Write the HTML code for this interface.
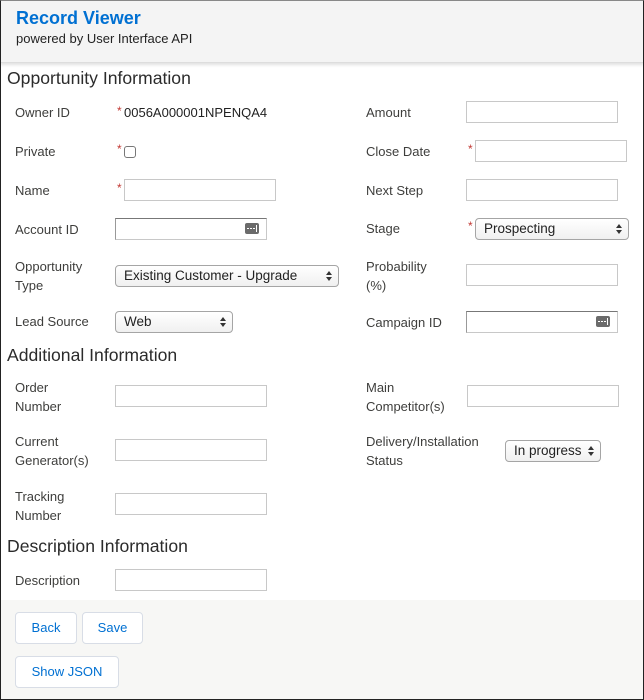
<!DOCTYPE html>
<html><head><meta charset="utf-8"><style>
*{box-sizing:border-box;margin:0;padding:0}
body{width:644px;height:700px;position:relative;background:#fff;font-family:"Liberation Sans",sans-serif;font-size:13px;color:#16325c;overflow:hidden}
.frame{position:absolute;left:0;top:0;width:644px;height:700px;border:1px solid #222;border-top:1px solid #888;pointer-events:none;z-index:10}
.hdr{position:absolute;left:0;top:0;width:644px;height:63px;background:#f4f4f4;border-bottom:1px solid #ddd;box-shadow:0 2px 3px rgba(0,0,0,.12)}
.t{position:absolute;white-space:nowrap}
.lbl{position:absolute;color:#3e3e3c;font-size:13px;line-height:19px}
.h2{position:absolute;left:7px;font-size:17.6px;color:#2b2b2b}
.in{position:absolute;height:22px;border:1px solid #c8c8c8;background:#fff}
.lk{border-top-color:#777;border-left-color:#999}
.ic{position:absolute;right:7px;top:4px;width:14px;height:11px;background:#6b6b6b;border-radius:2px}
.ic i{position:absolute;top:5px;width:2px;height:1px;background:#fff}
.sel{position:absolute;height:22px;border:1px solid #a5a5a5;border-radius:4px;background:linear-gradient(#fff,#f0f0f0);padding-left:8px;line-height:20px;color:#222;font-size:13.5px}
.sel::after{content:"";position:absolute;right:6px;top:5px;border-left:3px solid transparent;border-right:3px solid transparent;border-bottom:4px solid #333}
.sel::before{content:"";position:absolute;right:6px;top:11px;border-left:3px solid transparent;border-right:3px solid transparent;border-top:4px solid #333}
.req{position:absolute;color:#c23934;font-size:12px}
.btn{position:absolute;height:32px;border:1px solid #d8dde6;border-radius:4px;background:#fff;color:#0070d2;text-align:center;line-height:30px;font-size:13px}
</style></head><body>
<div class="hdr"></div>
<div class="t" style="left:16px;top:8px;font-size:18px;font-weight:bold;color:#0070d2">Record Viewer</div>
<div class="t" style="left:16px;top:31px;font-size:13px;color:#222">powered by User Interface API</div>

<div class="h2" style="top:68px">Opportunity Information</div>
<div class="lbl" style="left:15px;top:103px">Owner ID</div>
<div class="req" style="left:117px;top:104px">*</div>
<div class="t" style="left:124px;top:103px;color:#222;line-height:19px">0056A000001NPENQA4</div>
<div class="lbl" style="left:15px;top:142px">Private</div>
<div class="req" style="left:117px;top:142px">*</div>
<div style="position:absolute;left:124px;top:146px;width:12px;height:12px;border:1px solid #777;border-radius:3px"></div>
<div class="lbl" style="left:15px;top:181px">Name</div>
<div class="req" style="left:117px;top:181px">*</div>
<div class="in" style="left:124px;top:179px;width:152px"></div>
<div class="lbl" style="left:15px;top:220px">Account ID</div>
<div class="in lk" style="left:115px;top:218px;width:152px"><div class="ic"><i style="left:2px"></i><i style="left:5px"></i><i style="left:8px"></i><i style="left:11px;top:2px;height:7px;width:1px"></i></div></div>
<div class="lbl" style="left:15px;top:257px">Opportunity<br>Type</div>
<div class="sel" style="left:115px;top:265px;width:224px">Existing Customer - Upgrade</div>
<div class="lbl" style="left:15px;top:312px">Lead Source</div>
<div class="sel" style="left:115px;top:311px;width:118px">Web</div>

<div class="lbl" style="left:366px;top:103px">Amount</div>
<div class="in" style="left:466px;top:101px;width:152px"></div>
<div class="lbl" style="left:366px;top:142px">Close Date</div>
<div class="req" style="left:468px;top:142px">*</div>
<div class="in" style="left:475px;top:140px;width:152px"></div>
<div class="lbl" style="left:366px;top:181px">Next Step</div>
<div class="in" style="left:466px;top:179px;width:152px"></div>
<div class="lbl" style="left:366px;top:219px">Stage</div>
<div class="req" style="left:468px;top:219px">*</div>
<div class="sel" style="left:475px;top:218px;width:154px">Prospecting</div>
<div class="lbl" style="left:366px;top:257px">Probability<br>(%)</div>
<div class="in" style="left:466px;top:264px;width:152px"></div>
<div class="lbl" style="left:366px;top:313px">Campaign ID</div>
<div class="in lk" style="left:466px;top:311px;width:152px"><div class="ic"><i style="left:2px"></i><i style="left:5px"></i><i style="left:8px"></i><i style="left:11px;top:2px;height:7px;width:1px"></i></div></div>

<div class="h2" style="top:345px">Additional Information</div>
<div class="lbl" style="left:15px;top:378px">Order<br>Number</div>
<div class="in" style="left:115px;top:385px;width:152px"></div>
<div class="lbl" style="left:15px;top:432px">Current<br>Generator(s)</div>
<div class="in" style="left:115px;top:439px;width:152px"></div>
<div class="lbl" style="left:15px;top:487px">Tracking<br>Number</div>
<div class="in" style="left:115px;top:493px;width:152px"></div>
<div class="lbl" style="left:366px;top:378px">Main<br>Competitor(s)</div>
<div class="in" style="left:467px;top:385px;width:152px"></div>
<div class="lbl" style="left:366px;top:432px">Delivery/Installation<br>Status</div>
<div class="sel" style="left:505px;top:440px;width:96px">In progress</div>

<div class="h2" style="top:536px">Description Information</div>
<div class="lbl" style="left:15px;top:571px">Description</div>
<div class="in" style="left:115px;top:569px;width:152px"></div>

<div style="position:absolute;left:0;top:600px;width:644px;height:100px;background:#f7f7f5"></div>
<div class="btn" style="left:15px;top:612px;width:62px">Back</div>
<div class="btn" style="left:82px;top:612px;width:61px">Save</div>
<div class="btn" style="left:15px;top:656px;width:104px">Show JSON</div>
<div class="frame"></div>
</body></html>
